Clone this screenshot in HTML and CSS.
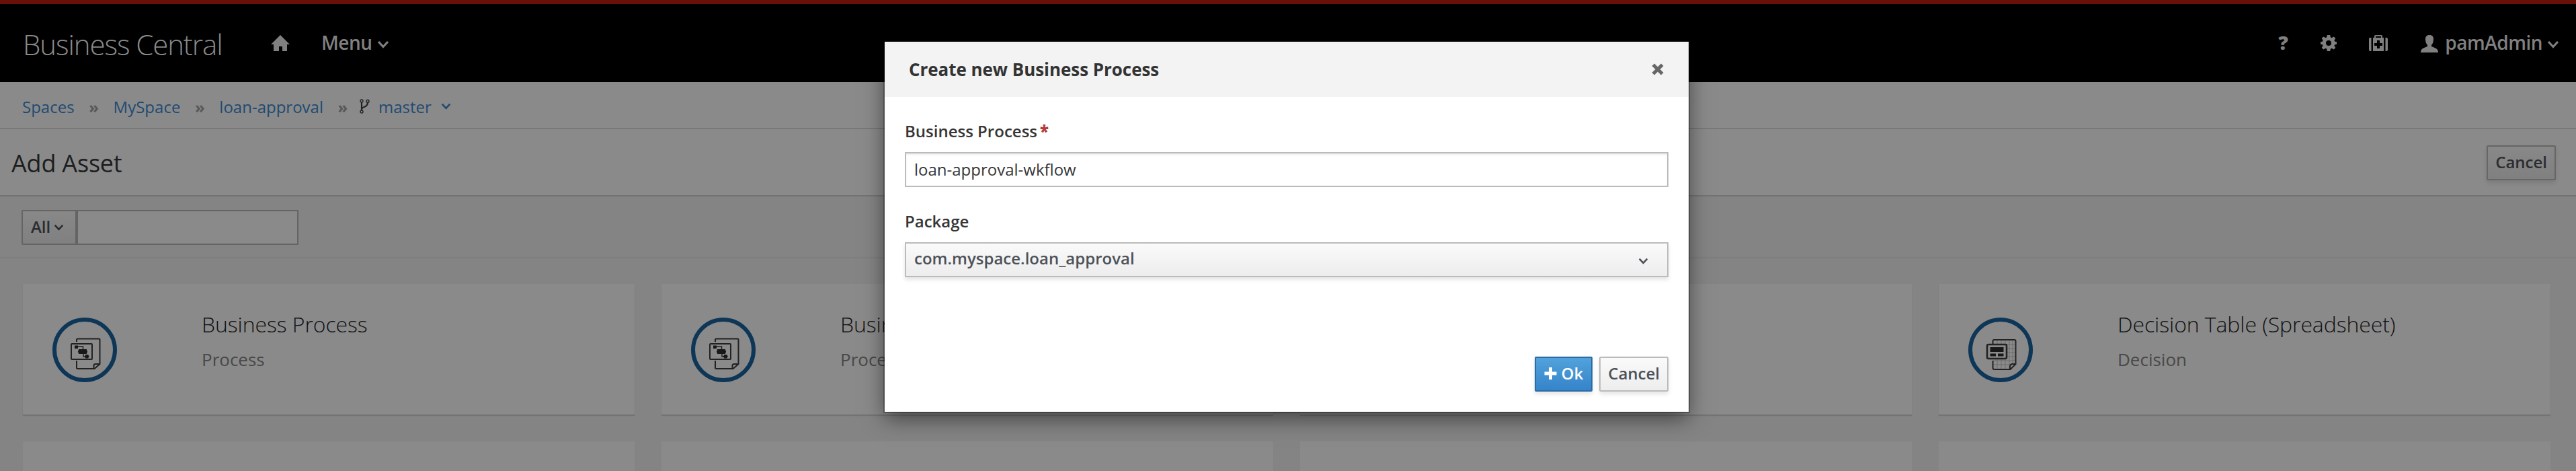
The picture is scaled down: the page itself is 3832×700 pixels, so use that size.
FILE: index.html
```html
<!DOCTYPE html>
<html lang="en">
<head>
<meta charset="utf-8">
<title>Business Central</title>
<link rel="stylesheet" href="styles.css">
</head>
<body>
<svg width="0" height="0" class="defs">
  <symbol id="chev" viewBox="0 0 18 12"><path d="M2 2l7 7.500L16 2" fill="none" stroke="currentColor" stroke-width="3.200"/></symbol>
  <symbol id="process" viewBox="0 0 96 96">
    <g fill="none" stroke="#222" stroke-width="2">
      <path d="M36 36v-3q0-1.500 1.500-1.500H69q1.500 0 1.500 1.500v36l-8 7H37.500Q36 76 36 74.500V64"/>
      <path d="M70 69h-6q-2.500 0-2.500 2.500V76"/>
      <rect x="28" y="39" width="31" height="23" rx="1"/>
      <path d="M37 43h8.500v5M46 54v4h5" stroke-width="1.500"/>
    </g>
    <path fill="#181818" d="M33 41.500h5V46h-5zM39 47h12v7H39zM38 49h14v3H38zM49 55h4.500v5.500H49zM48 56.500h6.500v2.500H48z"/>
  </symbol>
  <symbol id="table" viewBox="0 0 96 96">
    <path d="M43 34v43M49 34v43M55 34v43M61 34v43M66 34v36M37 40h34M37 46h34M37 52h34M37 58h34M37 64h34M37 70h28" fill="none" stroke="#6c6c6c" stroke-width="1"/>
    <path d="M36.500 39v-4q0-2 2-2h30q2 0 2 2v34l-8 8H39q-2.500 0-2.500-2.500V64M70 69h-4q-4 0-4 4v4" fill="none" stroke="#222" stroke-width="2"/>
    <rect x="28" y="40" width="29" height="21" rx="2" fill="#8a8a8a" stroke="#222" stroke-width="2.600"/>
    <path fill="#181818" d="M32.500 44h20v7h-20zM32.500 53.500h8.500v4h-8.500zM44 53.500h8.500v4H44z"/>
  </symbol>
</svg>

<header class="topbar">
  <div class="brand">Business Central</div>
  <svg class="home" viewBox="0 0 28 24"><path fill="currentColor" d="M14 0l14 14h-4v10h-7v-7h-5v7H4V14H0z"/></svg>
  <a class="navlink menu">Menu</a><svg class="chev navchev"><use href="#chev"/></svg>
  <div class="tools">
    <span class="help">?</span>
    <svg class="gear" viewBox="-12 -12 24 24"><path fill="currentColor" fill-rule="evenodd" d="M-2.200-12h4.400l.7 3.500 1.800.8 2.900-1.900 2.700 2.700-1.900 2.900.8 1.800 2.800.4v3.600l-2.800.4-.8 1.800 1.900 2.900-2.700 2.700-2.900-1.900-1.800.8-.7 3.500h-4.400l-.7-3.500-1.800-.8-2.900 1.900-2.700-2.700 1.900-2.900-.8-1.800-2.800-.4v-3.600l2.800-.4.8-1.800-1.900-2.900 2.700-2.700 2.900 1.900 1.800-.8zM0-4a4 4 0 1 0 0 8 4 4 0 1 0 0-8z"/></svg>
    <svg class="kit" viewBox="0 0 28 24"><path fill="currentColor" fill-rule="evenodd" d="M0 6q0-2 2-2h1.500v20H2q-2 0-2-2zM28 6q0-2-2-2h-1.500v20H26q2 0 2-2zM6 4h2V2q0-2 2-2h8q2 0 2 2v2h2v20H6zM10 2V4h8V2zM12 8v4H8v4h4v4h4v-4h4v-4h-4V8z"/></svg>
    <svg class="user" viewBox="0 0 26 26"><path fill="currentColor" d="M13 0c4 0 6 2.500 6 6 0 4-1 7-3 9v2c5 2 10 3 10 9H0c0-6 5-7 10-9v-2C8 13 7 10 7 6c0-3.500 2-6 6-6z"/></svg>
    <span class="navlink admin">pamAdmin</span><svg class="chev userchev"><use href="#chev"/></svg>
  </div>
</header>

<nav class="crumbs">
  <a>Spaces</a><i>»</i><a>MySpace</a><i>»</i><a>loan-approval</a><i>»</i>
  <svg class="fork" viewBox="0 0 15 22"><g fill="none" stroke="#222" stroke-width="1.400"><circle cx="3" cy="3" r="2"/><circle cx="12" cy="3.500" r="2"/><circle cx="3" cy="19" r="2"/></g><path d="M3 5v12M3 15c1-4 9-2 9-9.500" fill="none" stroke="#222" stroke-width="2.200"/></svg>
  <a>master</a><svg class="chev crumbchev"><use href="#chev"/></svg>
</nav>

<section class="titlebar"><h1>Add Asset</h1><button class="btn dim">Cancel</button></section>

<section class="filter"><button class="btn all">All<svg class="chev"><use href="#chev"/></svg></button><input class="search" type="text"></section>

<main class="grid">
  <article class="card"><div class="ring"><svg><use href="#process"/></svg></div><div class="txt"><h2>Business Process</h2><p>Process</p></div></article>
  <article class="card"><div class="ring"><svg><use href="#process"/></svg></div><div class="txt"><h2>Business Process</h2><p>Process</p></div></article>
  <article class="card"></article>
  <article class="card"><div class="ring"><svg><use href="#table"/></svg></div><div class="txt"><h2>Decision Table (Spreadsheet)</h2><p>Decision</p></div></article>
  <article class="card cut"></article><article class="card cut"></article><article class="card cut"></article><article class="card cut"></article>
</main>

<div class="modal" role="dialog">
  <div class="mhead"><h3>Create new Business Process</h3>
    <svg class="close" viewBox="0 0 16 16"><path d="M2 2l12 12M14 2L2 14" stroke="#666" stroke-width="4.600"/></svg></div>
  <div class="mbody">
    <label class="lab">Business Process<b>*</b></label>
    <div class="field">loan-approval-wkflow</div>
    <label class="lab second">Package</label>
    <div class="field select"><span>com.myspace.loan_approval</span><svg class="chev"><use href="#chev"/></svg></div>
  </div>
  <div class="mfoot"><button class="btn ok"><svg viewBox="0 0 18 18"><path d="M9 0v18M0 9h18" stroke="#fff" stroke-width="5"/></svg>Ok</button><button class="btn">Cancel</button></div>
</div>
</body>
</html>
```
FILE: styles.css
```css
* { box-sizing: border-box; }
body { margin: 0; width: 3832px; height: 700px; overflow: hidden; background: #848484; font-family: "Open Sans", sans-serif; font-size: 24px; color: #1c1e20; position: relative; }
h1, h2, h3, p { margin: 0; }
svg { display: block; flex: none; }
.defs { position: absolute; }
.chev { width: 18px; height: 12px; }
.topbar { height: 122px; border-top: 6px solid #6a0f09; background: #000; color: #808080; display: flex; align-items: flex-start; padding: 0 25px 0 34px; }
.brand { width: 369px; font-size: 42px; font-weight: 300; line-height: 56px; letter-spacing: -1.1px; margin-top: 32px; white-space: nowrap; color: #8a8a8a; }
.home { width: 28px; height: 24px; margin-top: 46px; }
.navlink { font-size: 28px; font-weight: 600; line-height: 36px; margin-top: 39px; letter-spacing: -0.5px; }
.menu { margin-left: 47px; }
.navchev { margin: 54px 0 0 7px; }
.tools { margin-left: auto; display: flex; align-items: flex-start; }
.help { font-size: 29px; font-weight: 800; line-height: 36px; margin-top: 39px; width: 63px; }
.gear { width: 24px; height: 24px; margin: 46px 48px 0 0; }
.kit { width: 28px; height: 24px; margin: 46px 49px 0 0; }
.user { width: 26px; height: 26px; margin: 46px 10px 0 0; }
.userchev { margin: 54px 0 0 7px; }
.crumbs { height: 70px; background: #8a8a8a; border-bottom: 2px solid #787878; display: flex; align-items: center; padding: 4px 0 0 33px; color: #1f4a72; }
.crumbs i { font-style: normal; font-weight: 700; color: #585858; width: 58px; text-align: center; }
.fork { width: 15px; height: 22px; margin: 0 13px 0 -4px; }
.crumbchev { width: 15px; height: 10px; margin: 0 0 0 14px; }
.titlebar { height: 100px; background: #8a8a8a; border-bottom: 2px solid #737373; display: flex; align-items: center; justify-content: space-between; padding: 0 30px 0 17px; }
h1 { font-size: 36px; font-weight: 400; line-height: 48px; margin-top: 3px; letter-spacing: -0.2px; }
.btn { height: 52px; border: 2px solid #bbb; border-radius: 2px; background: linear-gradient(#fafafa, #ededed); box-shadow: 0 4px 6px rgba(3, 3, 3, .1); font: 600 24px/44px "Open Sans", sans-serif; color: #4d5258; padding: 0 11px 2px; display: flex; align-items: center; }
.dim { border-color: #666; background: linear-gradient(#888, #808080); color: #2a2d30; margin-top: 2px; }
.filter { height: 92px; border-bottom: 2px solid #7e7e7e; display: flex; padding: 20px 0 0 32px; }
.all { width: 82px; padding: 0 0 2px 12px; border-color: #646464; background: linear-gradient(#888, #808080); color: #2a2d30; box-shadow: none; border-radius: 2px 0 0 2px; }
.all .chev { width: 15px; height: 10px; margin: 2px 0 0 5px; }
.search { width: 330px; height: 52px; border: 2px solid #646464; background: #8a8a8a; padding: 0; }
.grid { padding: 38px 38px 0 34px; display: grid; grid-template-columns: repeat(4, 910px); grid-template-rows: 194px 44px; gap: 40px; }
.card { background: #8a8a8a; box-shadow: 0 2px 1px #747474; display: flex; padding: 50px 0 0 44px; }
.cut { box-shadow: none; padding: 0; }
.ring { width: 96px; height: 96px; border: 6px solid #0e3657; border-radius: 50%; flex: none; }
.ring svg { width: 96px; height: 96px; margin: -6px; }
.txt { margin-left: 126px; white-space: nowrap; margin-top: -14px; }
h2 { font-size: 32px; font-weight: 300; line-height: 48px; letter-spacing: -0.1px; color: #101112; }
.txt p { font-size: 26px; line-height: 36px; margin-top: 10px; color: #484848; }
.modal { position: absolute; left: 1316px; top: 62px; width: 1196px; height: 550px; background: #fff; box-shadow: 0 0 0 2px rgba(0,0,0,.25), 0 10px 30px rgba(0, 0, 0, .5); }
.mhead { height: 82px; background: #f3f3f3; display: flex; align-items: center; justify-content: space-between; padding: 0 37px 0 36px; }
h3 { font-size: 26px; font-weight: 700; color: #333; letter-spacing: -0.05px; }
.close { width: 18px; height: 18px; }
.mbody { padding: 30px 30px 0; }
.lab { display: block; height: 52px; line-height: 41px; font-weight: 600; color: #363636; }
.lab b { color: #b33c3a; margin-left: 4px; }
.field { height: 52px; border: 2px solid #bbb; box-shadow: inset 0 2px 2px rgba(3,3,3,.075); padding: 0 12px; line-height: 48px; color: #363636; }
.second { margin-top: 30px; }
.select { display: flex; align-items: center; justify-content: space-between; background: linear-gradient(#fafafa, #ededed); box-shadow: 0 4px 6px rgba(3,3,3,.1); font-weight: 600; color: #4d5258; padding: 0 28px 0 12px; }
.select span { margin-top: -4px; }
.select .chev { width: 15px; height: 10px; margin-top: 3px; }
.mfoot { display: flex; justify-content: flex-end; gap: 10px; padding: 118px 30px 0; }
.ok { color: #fff; border-color: #2b6ca4; background: linear-gradient(#52a2dc, #3583c9); padding: 0 12px 2px; }
.ok svg { width: 19px; height: 18px; margin-right: 7px; }
```
